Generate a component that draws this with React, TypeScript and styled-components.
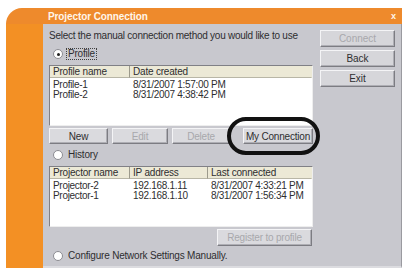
import styled, { createGlobalStyle } from "styled-components"

const GlobalStyle = createGlobalStyle`
	html, body {
		margin: 0;
		padding: 0;
		background: #ffffff;
	}
	body {
		font-family: "Liberation Sans", Arial, sans-serif;
		font-size: 10px;
		color: #2e2e30;
	}
`

const profiles = [
	{ name: "Profile-1", date: "8/31/2007 1:57:00 PM" },
	{ name: "Profile-2", date: "8/31/2007 4:38:42 PM" },
]

const history = [
	{ name: "Projector-2", ip: "192.168.1.11", last: "8/31/2007 4:33:21 PM" },
	{ name: "Projector-1", ip: "192.168.1.10", last: "8/31/2007 1:56:34 PM" },
]

export default function App() {
	return (
		<>
			<GlobalStyle />
			<Page>
				<Window>
					<TitleBar>
						<Title>Projector Connection</Title>
						<Close>x</Close>
					</TitleBar>
					<Body>
						<Strip />
						<Panel>
							<Main>
								<Prompt>Select the manual connection method you would like to use</Prompt>
								<RadioRow $top={6}>
									<Radio $checked />
									<RadioLabel $focus>Profile</RadioLabel>
								</RadioRow>
								<Table $cols="80px 1fr">
									<HeadCell>Profile name</HeadCell>
									<HeadCell $last>Date created</HeadCell>
									<TableBody $cols="80px 1fr">
										{profiles.map((p) => (
											<Row key={p.name}>
												<Cell>{p.name}</Cell>
												<Cell>{p.date}</Cell>
											</Row>
										))}
									</TableBody>
								</Table>
								<ButtonRow>
									<Button $w={59}>New</Button>
									<Button $w={56} disabled>
										Edit
									</Button>
									<Button $w={58} disabled>
										Delete
									</Button>
									<Highlight>
										<Button $w={70}>My Connection</Button>
										<Ring />
									</Highlight>
								</ButtonRow>
								<RadioRow $top={5}>
									<Radio />
									<RadioLabel>History</RadioLabel>
								</RadioRow>
								<Table $cols="80px 78px 1fr">
									<HeadCell>Projector name</HeadCell>
									<HeadCell>IP address</HeadCell>
									<HeadCell $last>Last connected</HeadCell>
									<TableBody $cols="80px 78px 1fr">
										{history.map((h) => (
											<Row key={h.name}>
												<Cell>{h.name}</Cell>
												<Cell>{h.ip}</Cell>
												<Cell>{h.last}</Cell>
											</Row>
										))}
									</TableBody>
								</Table>
								<RegisterRow>
									<Button $w={95} $h={17} disabled>
										Register to profile
									</Button>
								</RegisterRow>
								<RadioRow $top={4}>
									<Radio />
									<RadioLabel>Configure Network Settings Manually.</RadioLabel>
								</RadioRow>
							</Main>
							<Side>
								<SideButton disabled>Connect</SideButton>
								<SideButton>Back</SideButton>
								<SideButton>Exit</SideButton>
							</Side>
						</Panel>
					</Body>
				</Window>
			</Page>
		</>
	)
}

const Page = styled.div`
	width: 404px;
	height: 273px;
	padding: 8px 2px 0 6px;
	box-sizing: border-box;
	overflow: hidden;
`

const Window = styled.div`
	background: #f28c28;
	border-top-left-radius: 20px;
	height: 260px;
	display: flex;
	flex-direction: column;
`

const TitleBar = styled.div`
	height: 16px;
	display: flex;
	align-items: center;
	justify-content: space-between;
	padding: 0 6px 0 42px;
	background: #ee8a2c;
	border-top-left-radius: 20px;
`

const Title = styled.div`
	color: #fff6ea;
	font-weight: bold;
	font-size: 10px;
	letter-spacing: -0.1px;
`

const Close = styled.div`
	color: #fff6ea;
	font-weight: bold;
	font-size: 9px;
	line-height: 9px;
`

const Body = styled.div`
	flex: 1;
	display: flex;
	min-height: 0;
`

const Strip = styled.div`
	width: 37px;
	background: #f39024;
`

const Panel = styled.div`
	flex: 1;
	display: flex;
	background: #c8c8ce;
	border-right: 1px solid #9a9aa0;
	border-bottom: 2px solid #dcdce0;
	padding: 6px 6px 0 6px;
`

const Main = styled.div`
	width: 264px;
	display: flex;
	flex-direction: column;
`

const Side = styled.div`
	margin-left: 7px;
	display: flex;
	flex-direction: column;
	gap: 3px;
	width: 75px;
`

const Prompt = styled.div`
	font-size: 10px;
	line-height: 12px;
	letter-spacing: -0.25px;
`

const RadioRow = styled.div<{ $top: number }>`
	display: flex;
	align-items: center;
	gap: 3px;
	margin-top: ${(p) => p.$top}px;
	padding-left: 4px;
	height: 12px;
`

const Radio = styled.span<{ $checked?: boolean }>`
	width: 8px;
	height: 8px;
	border-radius: 50%;
	background: #ffffff;
	border: 1px solid #8c8c92;
	position: relative;
	&::after {
		content: "";
		display: ${(p) => (p.$checked ? "block" : "none")};
		position: absolute;
		left: 2.5px;
		top: 2.5px;
		width: 3px;
		height: 3px;
		border-radius: 50%;
		background: #202020;
	}
`

const RadioLabel = styled.span<{ $focus?: boolean }>`
	padding: 0 1px;
	border: 1px dotted ${(p) => (p.$focus ? "#404040" : "transparent")};
	line-height: 10px;
	letter-spacing: -0.2px;
`

const Table = styled.div<{ $cols: string }>`
	margin-top: 5px;
	height: 61px;
	box-sizing: border-box;
	display: grid;
	grid-template-columns: ${(p) => p.$cols};
	grid-template-rows: 12px 1fr;
	background: #ffffff;
	border-top: 1px solid #808086;
	border-left: 1px solid #808086;
	border-right: 1px solid #eeeeee;
	border-bottom: 1px solid #eeeeee;
`

const HeadCell = styled.div<{ $last?: boolean }>`
	background: #ece9d6;
	border-right: 1px solid ${(p) => (p.$last ? "#ece9d6" : "#9c9a8c")};
	border-bottom: 1px solid #b8b6a6;
	padding-left: 3px;
	line-height: 11px;
	letter-spacing: -0.2px;
`

const TableBody = styled.div<{ $cols: string }>`
	grid-column: 1 / -1;
	display: grid;
	grid-template-columns: ${(p) => p.$cols};
	grid-auto-rows: 10px;
	padding-top: 2px;
`

const Row = styled.div`
	display: contents;
`

const Cell = styled.div`
	padding-left: 3px;
	line-height: 10px;
	letter-spacing: -0.3px;
	white-space: nowrap;
	overflow: hidden;
`

const ButtonRow = styled.div`
	margin-top: 2px;
	display: flex;
	gap: 4px;
	align-items: center;
`

const Button = styled.button<{ $w: number; $h?: number }>`
	width: ${(p) => p.$w}px;
	height: ${(p) => p.$h ?? 16}px;
	padding: 0;
	font-family: "Liberation Sans", Arial, sans-serif;
	font-size: 10px;
	letter-spacing: -0.2px;
	color: #2e2e30;
	background: #dadade;
	border: 1px solid;
	border-color: #f4f4f6 #7c7c82 #7c7c82 #f4f4f6;
	box-shadow: inset -1px -1px 0 #aeaeb4;
	&:disabled {
		color: #a8a8ac;
	}
`

const Highlight = styled.div`
	position: relative;
	margin-left: auto;
	display: flex;
`

const Ring = styled.div`
	position: absolute;
	left: -16px;
	top: -11px;
	width: 93px;
	height: 38px;
	box-sizing: border-box;
	border: 4px solid #111111;
	border-radius: 19px;
	pointer-events: none;
`

const RegisterRow = styled.div`
	margin-top: 2px;
	display: flex;
	justify-content: flex-end;
	padding-right: 1px;
`

const SideButton = styled.button`
	width: 75px;
	height: 17px;
	padding: 0;
	font-family: "Liberation Sans", Arial, sans-serif;
	font-size: 10px;
	color: #2e2e30;
	background: #d6d6da;
	border: 1px solid;
	border-color: #f4f4f6 #7c7c82 #7c7c82 #f4f4f6;
	box-shadow: inset -1px -1px 0 #aeaeb4;
	&:disabled {
		color: #a8a8ac;
	}
`
